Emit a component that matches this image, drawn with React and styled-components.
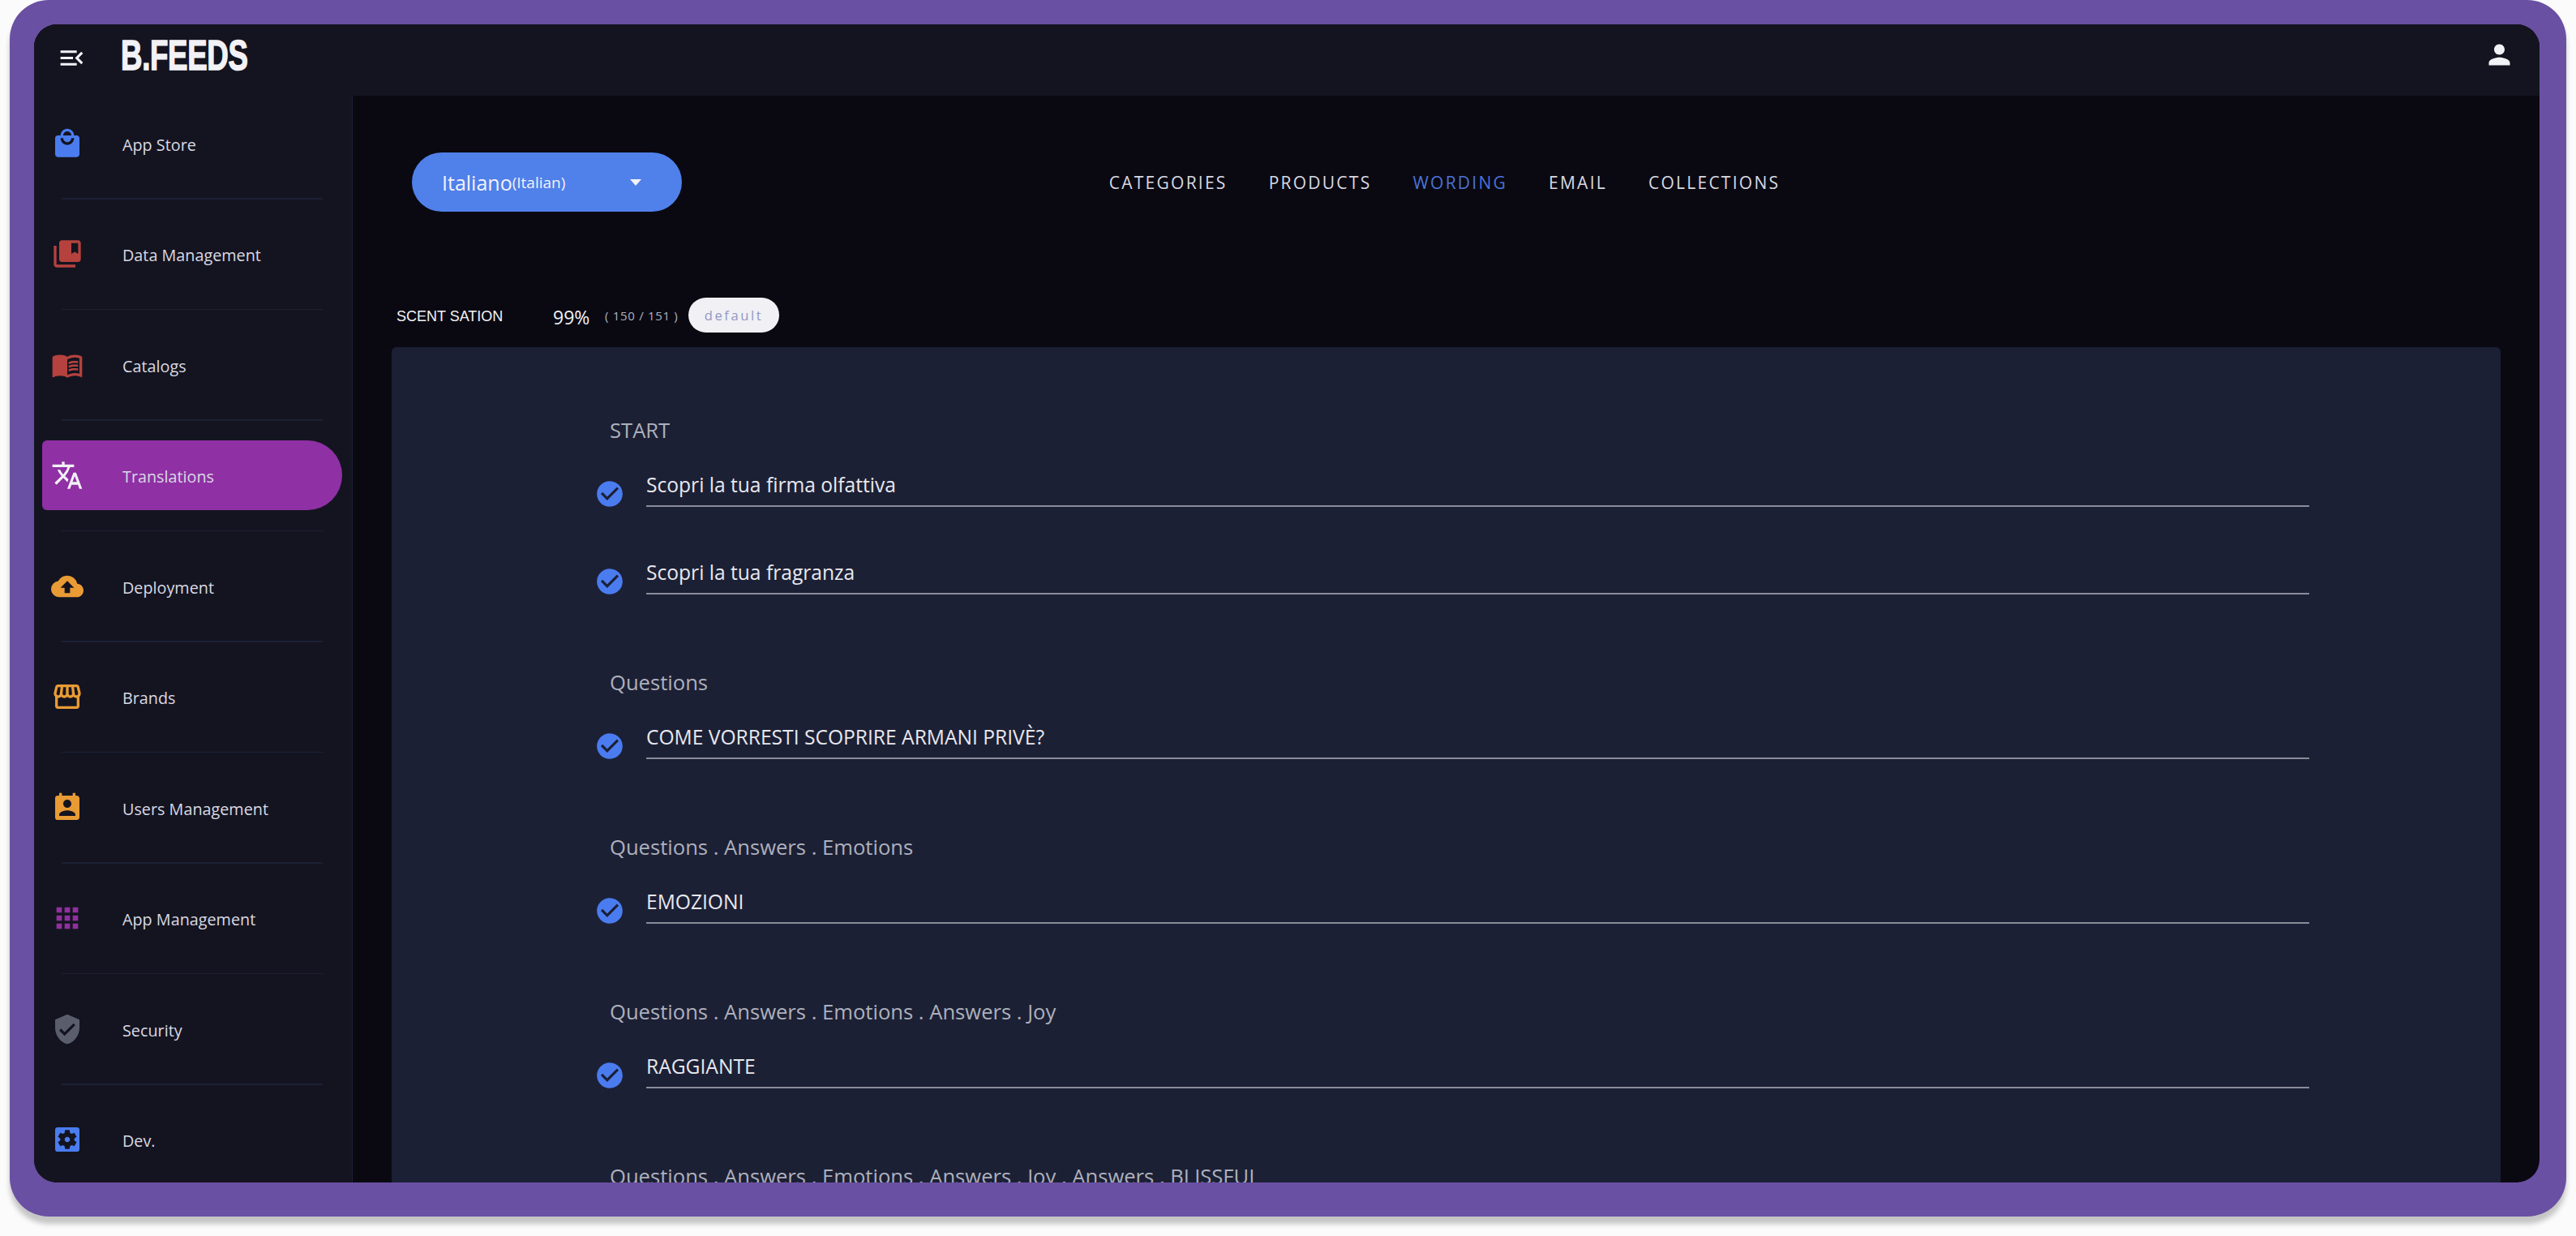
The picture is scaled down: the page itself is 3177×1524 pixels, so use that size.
import React from "react";
import styled, { createGlobalStyle } from "styled-components";
import {
  MdApps,
  MdCheckCircle,
  MdCloudUpload,
  MdCollectionsBookmark,
  MdLocalMall,
  MdMenuBook,
  MdMenuOpen,
  MdPermContactCalendar,
  MdPerson,
  MdSettingsApplications,
  MdStorefront,
  MdTranslate,
  MdVerifiedUser,
} from "react-icons/md";

const Global = createGlobalStyle`
  html, body {
    margin: 0;
    height: 1524px;
    overflow: hidden;
    background: #fbfbfc;
    font-family: "Open Sans", "Noto Sans", sans-serif;
  }
  * { box-sizing: border-box; }
`;

// purple frame round the whole app
const Frame = styled.div`
  width: 3153px;
  height: 1500px;
  margin-left: 12px;
  padding: 30px 33px 42px 30px;
  background: #6a50a2;
  border-radius: 48px;
  box-shadow: 0 9px 6px rgba(0, 0, 0, 0.22);
`;

const Shell = styled.div`
  height: 100%;
  display: flex;
  flex-direction: column;
  overflow: hidden;
  border-radius: 28px;
  background: #0a0912;
`;

const TopBar = styled.header`
  flex: 0 0 88px;
  display: flex;
  align-items: flex-start;
  padding: 18px 30px 0 28px;
  background: #141420;
  color: #f2f2f6;
`;

const Logo = styled.div`
  margin: 2px 0 0 42px;
  font-family: "Liberation Sans", sans-serif;
  font-size: 51px;
  line-height: 37px;
  height: 37px;
  font-weight: 700;
  color: #f2f2f6;
  -webkit-text-stroke: 1.4px #f2f2f6;
  letter-spacing: -0.5px;
  transform: scaleX(0.72);
  transform-origin: left center;
`;

const Spacer = styled.div`
  flex: 1;
`;

const Body = styled.div`
  flex: 1;
  min-height: 0;
  display: flex;
`;

const Sidebar = styled.nav`
  flex: 0 0 393px;
  overflow: hidden;
  background: #141420;
  border-right: 1px solid #1c2035;
`;

const Row = styled.div`
  height: ${(p) => (p.$first ? 126 : 135)}px;
  padding: ${(p) => (p.$first ? "0 12px 9px 10px" : "0 12px 0 10px")};
  display: flex;
  align-items: center;
`;

const RowInner = styled.div`
  flex: 1;
  height: 86px;
  display: flex;
  align-items: center;
  gap: 49px;
  padding-left: 11px;
  border-radius: 6px 43px 43px 6px;
  background: ${(p) => (p.$active ? "#9030a5" : "transparent")};
`;

const RowIcon = styled.span`
  display: flex;
  font-size: 40px;
  color: ${(p) => p.$color};
`;

const RowLabel = styled.span`
  margin-left: -1px;
  padding-top: 4px;
  font-size: 19.8px;
  line-height: 28px;
  color: #d9d9e2;
`;

const Divider = styled.div`
  height: 1.5px;
  margin: 0 36px 0 34px;
  background: #1c2035;
`;

const Main = styled.main`
  flex: 1;
  min-width: 0;
  overflow: hidden;
  padding: 70px 48px 0;
`;

const HeadRow = styled.div`
  display: grid;
  grid-template-columns: 1fr auto 1fr;
  align-items: center;
  height: 73px;
`;

const LangPill = styled.div`
  width: 333px;
  height: 73px;
  margin-left: 25px;
  padding: 0 50px 0 37px;
  display: flex;
  align-items: center;
  border-radius: 37px;
  background: #5080ea;
  color: #f2f2f6;
  font-size: 25px;
`;

const LangSub = styled.span`
  font-size: 19px;
`;

const Arrow = styled.span`
  margin-left: auto;
  width: 0;
  height: 0;
  border-left: 7.5px solid transparent;
  border-right: 7.5px solid transparent;
  border-top: 8px solid #f2f2f6;
`;

const Tabs = styled.div`
  display: flex;
  gap: 51px;
  margin-left: -4px;
`;

const Tab = styled.span`
  font-size: 21px;
  letter-spacing: 2.25px;
  color: ${(p) => (p.$active ? "#4a72d8" : "#d9d9e2")};
`;

const MetaRow = styled.div`
  height: 43px;
  margin: 106px 0 18px;
  padding-left: 6px;
  display: flex;
  align-items: center;
`;

const Project = styled.span`
  width: 193px;
  padding-top: 3px;
  font-family: "Liberation Sans", Arial, sans-serif;
  font-size: 18px;
  color: #f2f2f6;
`;

const Percent = styled.span`
  width: 64px;
  padding-top: 4px;
  font-size: 23px;
  color: #f2f2f6;
`;

const Count = styled.span`
  width: 103px;
  font-size: 15px;
  letter-spacing: 0.7px;
  color: #b0b2bc;
`;

const DefaultTag = styled.span`
  width: 112px;
  height: 43px;
  display: flex;
  align-items: center;
  justify-content: center;
  border-radius: 22px;
  background: #f0f0f5;
  color: #9298c2;
  font-size: 16.5px;
  letter-spacing: 2.6px;
`;

const Card = styled.section`
  height: 1100px;
  padding: 83px 236px 0 250px;
  border-radius: 6px;
  background: #1c2035;
`;

const Group = styled.div`
  & + & {
    margin-top: 89px;
  }
`;

const GroupLabel = styled.div`
  height: 40px;
  margin: 0 0 20px 19px;
  font-size: 25.6px;
  line-height: 40px;
  white-space: nowrap;
  color: #adb0bc;
`;

const Field = styled.div`
  height: 54px;
  display: flex;
  gap: 26px;
  & + & {
    margin-top: 54px;
  }
`;

const Check = styled.span`
  display: flex;
  flex: 0 0 38px;
  height: 38px;
  margin-top: 19px;
  font-size: 38px;
  color: #4a7cf0;
`;

const Value = styled.div`
  flex: 1;
  height: 54px;
  padding-top: 10px;
  border-bottom: 2px solid #8a8c98;
  font-size: 24.6px;
  line-height: 34px;
  color: #e8e8ee;
`;

const menu = [
  { label: "App Store", Icon: MdLocalMall, color: "#4a7cf0" },
  { label: "Data Management", Icon: MdCollectionsBookmark, color: "#b5423e" },
  { label: "Catalogs", Icon: MdMenuBook, color: "#b5423e" },
  { label: "Translations", Icon: MdTranslate, color: "#f2f2f6", active: true },
  { label: "Deployment", Icon: MdCloudUpload, color: "#e99b35" },
  { label: "Brands", Icon: MdStorefront, color: "#e99b35" },
  { label: "Users Management", Icon: MdPermContactCalendar, color: "#e99b35" },
  { label: "App Management", Icon: MdApps, color: "#90309f" },
  { label: "Security", Icon: MdVerifiedUser, color: "#5a5e6c" },
  { label: "Dev.", Icon: MdSettingsApplications, color: "#4a7cf0" },
];

const tabs = ["CATEGORIES", "PRODUCTS", "WORDING", "EMAIL", "COLLECTIONS"];

const groups = [
  { label: "START", values: ["Scopri la tua firma olfattiva", "Scopri la tua fragranza"] },
  { label: "Questions", values: ["COME VORRESTI SCOPRIRE ARMANI PRIVÈ?"] },
  { label: "Questions . Answers . Emotions", values: ["EMOZIONI"] },
  { label: "Questions . Answers . Emotions . Answers . Joy", values: ["RAGGIANTE"] },
  { label: "Questions . Answers . Emotions . Answers . Joy . Answers . BLISSFUL", values: [] },
];

const App = () => (
  <>
    <Global />
    <Frame>
      <Shell>
        <TopBar>
          <MdMenuOpen size={37} style={{ marginTop: 5 }} />
          <Logo>B.FEEDS</Logo>
          <Spacer />
          <MdPerson size={39} />
        </TopBar>
        <Body>
          <Sidebar>
            {menu.map(({ label, Icon, color, active }, i) => (
              <React.Fragment key={label}>
                <Row $first={i === 0}>
                  <RowInner $active={active}>
                    <RowIcon $color={color}>
                      <Icon />
                    </RowIcon>
                    <RowLabel>{label}</RowLabel>
                  </RowInner>
                </Row>
                {i < menu.length - 1 && <Divider />}
              </React.Fragment>
            ))}
          </Sidebar>
          <Main>
            <HeadRow>
              <LangPill>
                Italiano<LangSub>(Italian)</LangSub>
                <Arrow />
              </LangPill>
              <Tabs>
                {tabs.map((t) => (
                  <Tab key={t} $active={t === "WORDING"}>
                    {t}
                  </Tab>
                ))}
              </Tabs>
              <div />
            </HeadRow>
            <MetaRow>
              <Project>SCENT SATION</Project>
              <Percent>99%</Percent>
              <Count>( 150 / 151 )</Count>
              <DefaultTag>default</DefaultTag>
            </MetaRow>
            <Card>
              {groups.map((g) => (
                <Group key={g.label}>
                  <GroupLabel>{g.label}</GroupLabel>
                  {g.values.map((v) => (
                    <Field key={v}>
                      <Check>
                        <MdCheckCircle />
                      </Check>
                      <Value>{v}</Value>
                    </Field>
                  ))}
                </Group>
              ))}
            </Card>
          </Main>
        </Body>
      </Shell>
    </Frame>
  </>
);

export default App;
